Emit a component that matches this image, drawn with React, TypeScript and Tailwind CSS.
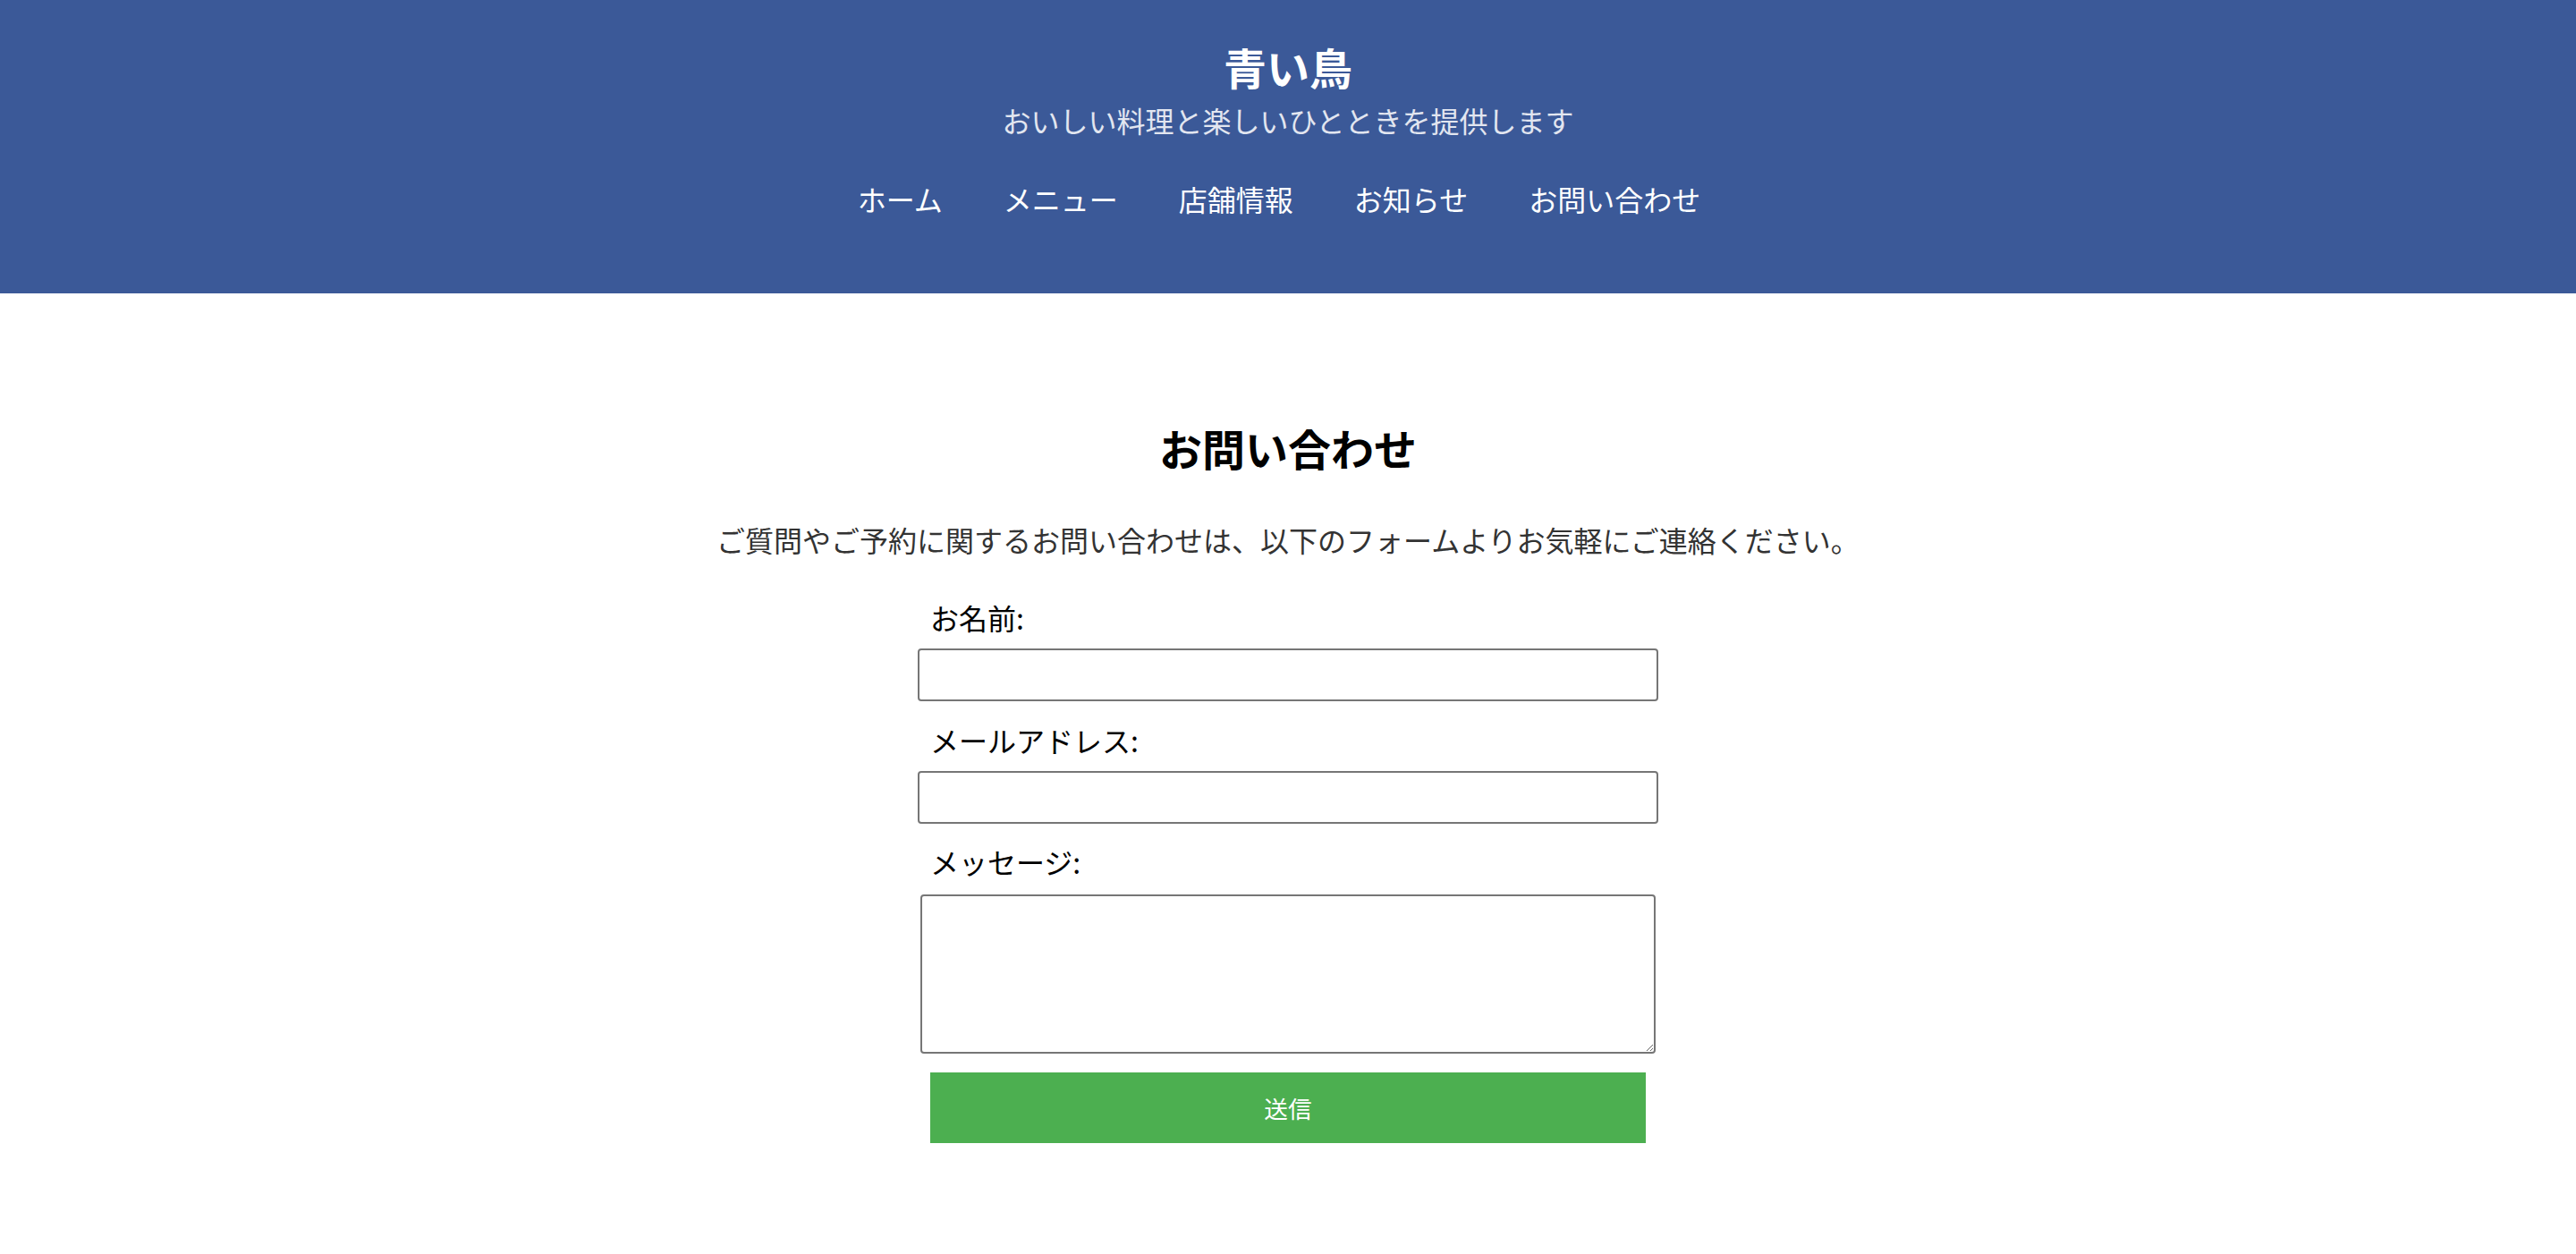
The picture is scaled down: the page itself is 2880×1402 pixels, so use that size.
import React, { useState } from 'react';

const navItems = ['ホーム', 'メニュー', '店舗情報', 'お知らせ', 'お問い合わせ'];

export default function App() {
    const [form, setForm] = useState({ name: '', email: '', message: '' });

    const handleSubmit = (e: React.FormEvent) => {
        e.preventDefault();
    };

    return (
        <div className="min-h-screen bg-white font-['Noto_Sans_CJK_JP',sans-serif]">
            {/* Header */}
            <header className="bg-[#3b5998] pt-[50px] pb-[90px] text-center text-white">
                <h1 className="text-[48px] font-bold leading-none">青い鳥</h1>
                <p className="mt-[20px] text-[32px] leading-none text-[#e2e6f0]">おいしい料理と楽しいひとときを提供します</p>
                <nav className="mt-[56px]">
                    <ul className="flex justify-center gap-[68px] pr-[20px] text-[32px] leading-none">
                        {navItems.map(item => (
                            <li key={item}>
                                <a href="#" className="text-white">{item}</a>
                            </li>
                        ))}
                    </ul>
                </nav>
            </header>

            {/* Contact */}
            <main className="flex flex-col items-center pt-[148px] pb-[120px]">
                <h2 className="text-[48px] font-bold leading-none text-black">お問い合わせ</h2>
                <p className="mt-[63px] text-[32px] leading-none text-[#333]">
                    ご質問やご予約に関するお問い合わせは、以下のフォームよりお気軽にご連絡ください。
                </p>

                <form onSubmit={handleSubmit} className="mt-[55px] flex w-[800px] flex-col items-center">
                    <label className="w-full text-left text-[32px] leading-none text-black">お名前:</label>
                    <input
                        type="text"
                        value={form.name}
                        onChange={e => setForm({ ...form, name: e.target.value })}
                        className="mt-[19px] h-[59px] w-[828px] shrink-0 rounded-[4px] border-2 border-[#767676] bg-white px-[12px] text-[26px] outline-none"
                    />

                    <label className="mt-[27px] w-full text-left text-[32px] leading-none text-black">メールアドレス:</label>
                    <input
                        type="email"
                        value={form.email}
                        onChange={e => setForm({ ...form, email: e.target.value })}
                        className="mt-[19px] h-[59px] w-[828px] shrink-0 rounded-[4px] border-2 border-[#767676] bg-white px-[12px] text-[26px] outline-none"
                    />

                    <label className="mt-[26px] w-full text-left text-[32px] leading-none text-black">メッセージ:</label>
                    <textarea
                        value={form.message}
                        onChange={e => setForm({ ...form, message: e.target.value })}
                        className="mt-[21px] h-[178px] w-[822px] shrink-0 rounded-[4px] border-2 border-[#767676] bg-white p-[4px] text-[26px] outline-none"
                    />

                    <button
                        type="submit"
                        className="mt-[21px] h-[79px] w-[800px] bg-[#4caf50] text-[26.67px] text-white"
                    >
                        送信
                    </button>
                </form>
            </main>
        </div>
    );
}
